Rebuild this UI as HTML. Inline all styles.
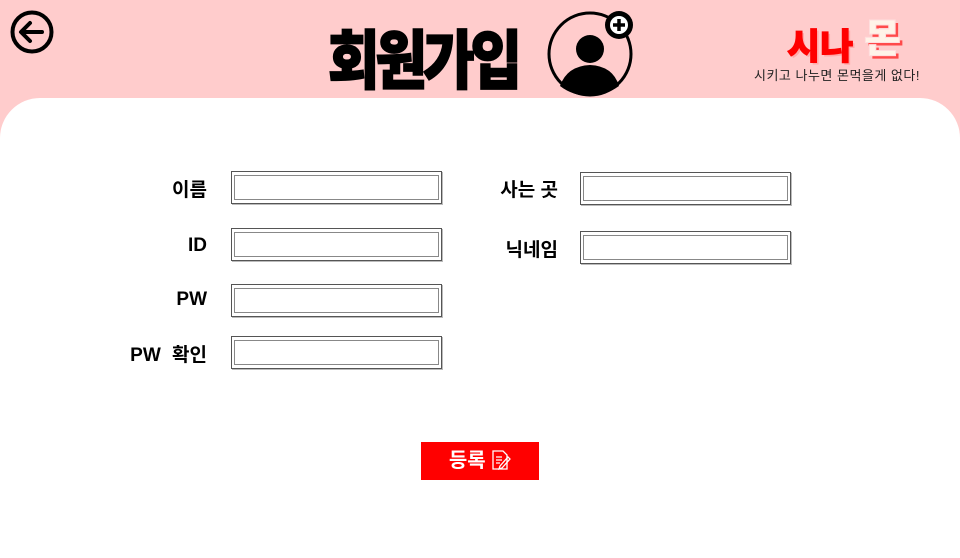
<!DOCTYPE html>
<html><head><meta charset="utf-8"><style>
*{margin:0;padding:0;box-sizing:border-box}
body{width:960px;height:540px;background:#ffcccc;position:relative;overflow:hidden;font-family:"Liberation Sans","Noto Sans CJK KR",sans-serif}
.panel{position:absolute;left:0;top:98px;width:960px;height:460px;background:#fff;border-radius:40px 40px 0 0}
.lbl{position:absolute;font-size:19px;font-weight:bold;color:#000;text-align:right;width:120px}
.in{position:absolute;width:211px;height:33px;border:1px solid #555;box-shadow:1px 1px 0 #bbb}
.in::after{content:"";position:absolute;left:2px;top:3px;right:2px;bottom:3px;border:1px solid #888}
.title{position:absolute;left:328px;top:10px;font-size:56px;font-weight:900;letter-spacing:-4px;color:#000;-webkit-text-stroke:1.5px #000;transform:scaleY(1.15);transform-origin:top left}
.btn{position:absolute;left:421px;top:442px;width:118px;height:38px;background:#ff0000;color:#fff;font-weight:bold;font-size:20px;text-align:center;line-height:38px}
</style></head><body>
<svg style="position:absolute;left:9px;top:10px" width="46" height="46" viewBox="0 0 46 46"><circle cx="23" cy="22" r="19.5" fill="none" stroke="#000" stroke-width="4"/><path d="M33 22H13M21 13l-9 9 9 9" fill="none" stroke="#000" stroke-width="4" stroke-linecap="round" stroke-linejoin="round"/></svg>
<div class="title">회원가입</div>
<svg style="position:absolute;left:545px;top:8px" width="92" height="92" viewBox="0 0 92 92"><circle cx="45" cy="46" r="41" fill="#ffcccc" stroke="#000" stroke-width="3"/><circle cx="45" cy="41" r="14" fill="#000"/><path d="M15 78 Q22 58 45 57 Q68 58 74 78 Q60 88 45 88 Q28 88 15 78Z" fill="#000"/><circle cx="74" cy="17" r="14" fill="#000"/><circle cx="74" cy="17" r="9" fill="#fff"/><path d="M74 11v12M68 17h12" stroke="#000" stroke-width="3.5"/></svg>
<div style="position:absolute;left:787px;top:18px;font-size:36px;font-weight:900;color:#ff0000;-webkit-text-stroke:1px #ff0000;text-shadow:2px 2px 0 #ffaaaa">시나</div>
<div style="position:absolute;left:864px;top:6px;font-size:40px;font-weight:900;color:#fff3e8;-webkit-text-stroke:1px #ffdede;text-shadow:3px 3px 0 #ff4a4a">몬</div>
<div style="position:absolute;left:754px;top:65px;font-size:13px;color:#222;letter-spacing:0.5px">시키고 나누면 몬먹을게 없다!</div>
<div class="panel"></div>
<div class="lbl" style="left:87px;top:175px">이름</div>
<div class="lbl" style="left:87px;top:235px">ID</div>
<div class="lbl" style="left:87px;top:289px">PW</div>
<div class="lbl" style="left:87px;top:340px;word-spacing:6px">PW 확인</div>
<div class="lbl" style="left:438px;top:175px">사는 곳</div>
<div class="lbl" style="left:438px;top:235px">닉네임</div>
<div class="in" style="left:231px;top:171px"></div>
<div class="in" style="left:231px;top:228px"></div>
<div class="in" style="left:231px;top:284px"></div>
<div class="in" style="left:231px;top:336px"></div>
<div class="in" style="left:580px;top:172px"></div>
<div class="in" style="left:580px;top:231px"></div>
<div class="btn">등록 <svg width="20" height="22" viewBox="0 0 20 22" style="vertical-align:-4px"><path d="M2 2h10l4 4v14H2z" fill="none" stroke="#fff" stroke-width="1.3"/><path d="M5 8h6M5 11h6M5 14h4M9 17l8-9 2 2-8 9-3 1z" fill="none" stroke="#fff" stroke-width="1.3"/></svg></div>
</body></html>
